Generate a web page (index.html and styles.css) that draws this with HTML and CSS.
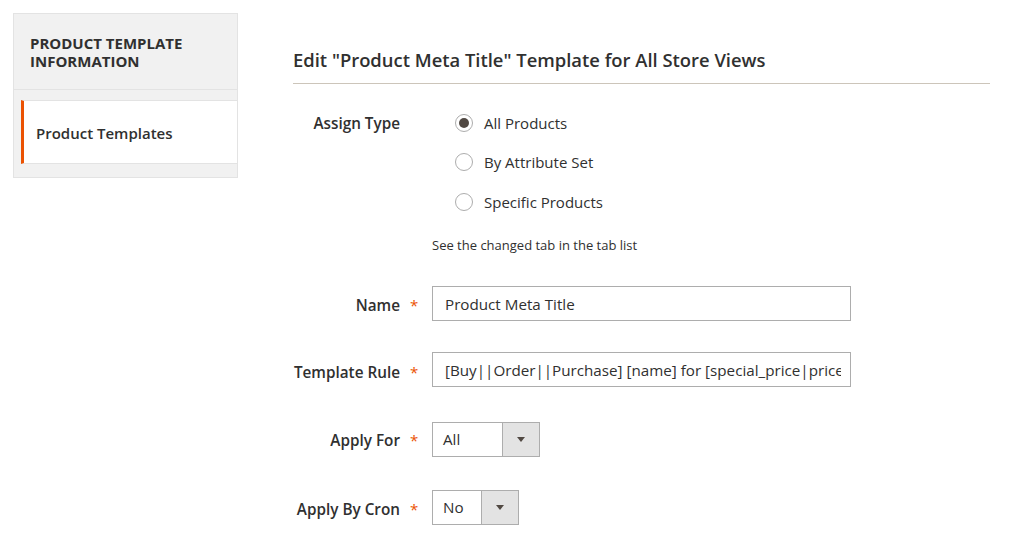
FILE: index.html
```html
<!DOCTYPE html>
<html>
<head>
<meta charset="utf-8">
<link rel="stylesheet" href="styles.css">
</head>
<body>
<div class="page">
  <aside class="nav">
    <div class="nav-title">PRODUCT TEMPLATE<br>INFORMATION</div>
    <ul class="nav-items">
      <li class="nav-item active">Product Templates</li>
    </ul>
  </aside>
  <main class="main">
    <h2 class="title">Edit "Product Meta Title" Template for All Store Views</h2>
    <div class="form">
      <div class="row row-radios">
        <div class="label"><span>Assign Type</span><span class="star none"></span></div>
        <div class="control">
          <div class="radios">
            <div class="radio-opt"><span class="radio checked"></span><span>All Products</span></div>
            <div class="radio-opt"><span class="radio"></span><span>By Attribute Set</span></div>
            <div class="radio-opt"><span class="radio"></span><span>Specific Products</span></div>
          </div>
          <div class="note">See the changed tab in the tab list</div>
        </div>
      </div>
      <div class="row row-name">
        <div class="label"><span>Name</span><span class="star">*</span></div>
        <div class="control"><input class="input" type="text" value="Product Meta Title"></div>
      </div>
      <div class="row row-rule">
        <div class="label"><span>Template Rule</span><span class="star">*</span></div>
        <div class="control"><input class="input" type="text" value="[Buy||Order||Purchase] [name] for [special_price|price] only"></div>
      </div>
      <div class="row row-for">
        <div class="label"><span>Apply For</span><span class="star">*</span></div>
        <div class="control">
          <div class="select sel-for"><span class="sel-val">All</span><span class="sel-arrow"><span class="tri"></span></span></div>
        </div>
      </div>
      <div class="row row-cron">
        <div class="label"><span>Apply By Cron</span><span class="star">*</span></div>
        <div class="control">
          <div class="select sel-cron"><span class="sel-val">No</span><span class="sel-arrow"><span class="tri"></span></span></div>
        </div>
      </div>
    </div>
  </main>
</div>
</body>
</html>
```

FILE: styles.css
```css
* { box-sizing: border-box; }
html, body { margin: 0; padding: 0; background: #fff; }
body {
  font-family: "Open Sans", "Liberation Sans", sans-serif;
  color: #303030;
  font-size: 15px;
}
.page {
  display: flex;
  align-items: flex-start;
  padding: 13px 0 0 13px;
}
.nav {
  width: 225px;
  flex: none;
  background: #f1f1f1;
  border: 1px solid #e3e3e3;
}
.nav-title {
  padding: 20px 10px 19px 16px;
  font-size: 15px;
  line-height: 18px;
  font-weight: 700;
  color: #303030;
  border-bottom: 1px solid #e3e3e3;
}
.nav-items {
  list-style: none;
  margin: 0;
  padding: 10px 0 13px 7px;
}
.nav-item {
  height: 64px;
  display: flex;
  align-items: center;
  background: #fff;
  border-left: 3px solid #eb5202;
  border-top: 1px solid #e3e3e3;
  border-bottom: 1px solid #e3e3e3;
  padding: 2px 0 0 12px;
  font-size: 15px;
  font-weight: 600;
  color: #303030;
}
.main {
  margin-left: 55px;
  width: 697px;
  flex: none;
}
.title {
  margin: 35px 0 0 0;
  padding: 0 0 11px 0;
  font-size: 18.4px;
  line-height: 24px;
  font-weight: 600;
  color: #303030;
  border-bottom: 1px solid #ccc5ba;
}
.form { padding-top: 19px; }
.row {
  display: flex;
  align-items: center;
}
.label {
  width: 139px;
  flex: none;
  display: flex;
  justify-content: flex-end;
  align-items: center;
  padding-right: 15px;
  font-weight: 600;
  font-size: 15.3px;
  color: #303030;
  white-space: nowrap;
}
.star {
  width: 7px;
  margin-left: 10px;
  color: #eb5202;
  font-weight: 400;
  font-size: 15px;
}
.star.none { visibility: hidden; }
.control { flex: 1; }
.row-radios { align-items: flex-start; }
.row-radios .label { height: 39.5px; padding-top: 1px; }
.radios { padding-left: 23px; }
.radio-opt {
  height: 39.5px;
  display: flex;
  align-items: center;
  gap: 11px;
  font-size: 15px;
}
.radio {
  width: 18px;
  height: 18px;
  border: 1px solid #adadad;
  border-radius: 50%;
  background: #fff;
  display: flex;
  align-items: center;
  justify-content: center;
}
.radio.checked::after {
  content: "";
  width: 10px;
  height: 10px;
  border-radius: 50%;
  background: #514943;
}
.note {
  margin-top: 14px;
  font-size: 13px;
  line-height: 18px;
}
.row-name { margin-top: 32px; }
.row-name .label { padding-top: 3px; }
.row-rule { margin-top: 31px; }
.row-rule .label { padding-top: 6px; }
.row-for { margin-top: 35px; }
.row-for .label { padding-top: 2px; }
.row-cron { margin-top: 33px; }
.row-cron .label { padding-top: 3px; }
.input {
  display: block;
  width: 419px;
  height: 35px;
  border: 1px solid #adadad;
  border-radius: 0;
  padding: 1px 9px 0 12px;
  font-family: "Open Sans", "Liberation Sans", sans-serif;
  font-size: 15.2px;
  color: #303030;
  background: #fff;
  outline: none;
}
.select {
  display: flex;
  height: 35px;
  border: 1px solid #adadad;
  background: #fff;
}
.sel-for { width: 108px; }
.sel-cron { width: 87px; }
.sel-val {
  flex: 1;
  display: flex;
  align-items: center;
  padding-left: 10px;
  font-size: 15.2px;
}
.sel-arrow {
  width: 37px;
  flex: none;
  background: #e3e3e3;
  border-left: 1px solid #adadad;
  display: flex;
  align-items: center;
  justify-content: center;
}
.tri {
  width: 0;
  height: 0;
  border-left: 4px solid transparent;
  border-right: 4px solid transparent;
  border-top: 5px solid #514943;
}
```
